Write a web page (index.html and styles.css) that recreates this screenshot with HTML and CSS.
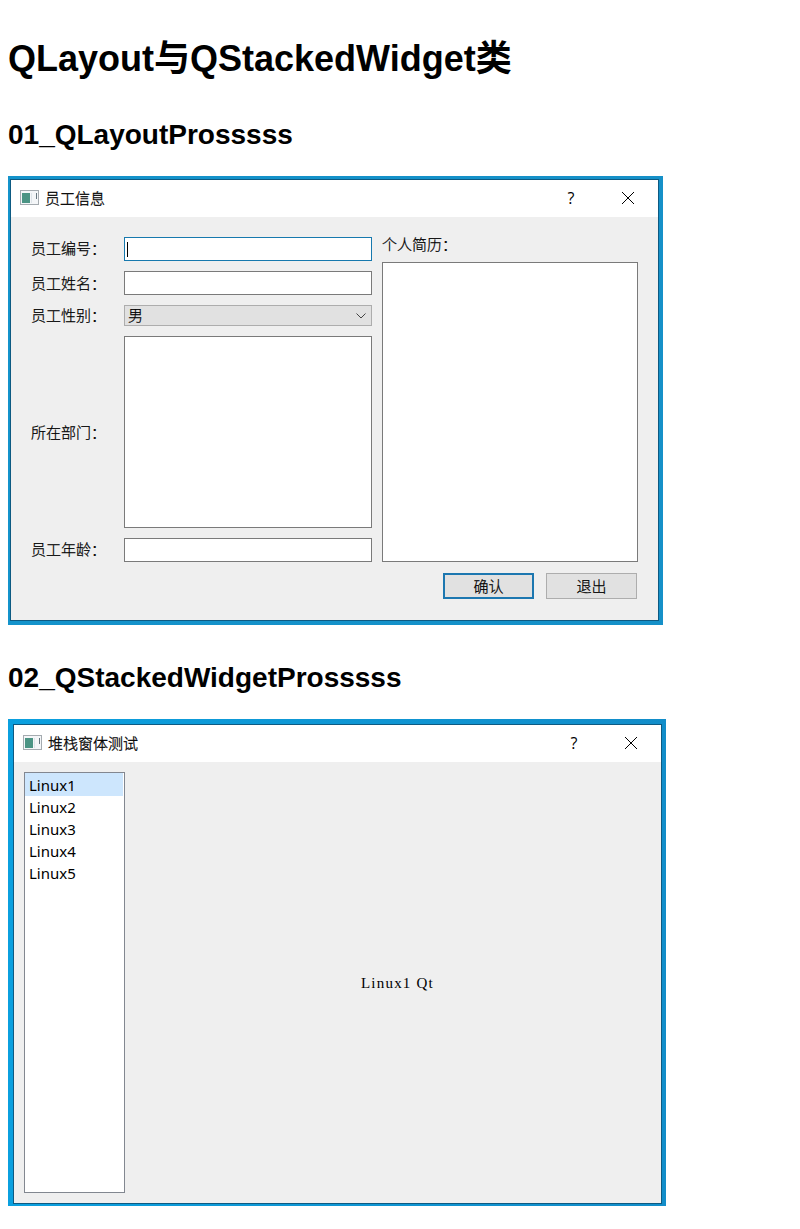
FILE: index.html
```html
<!DOCTYPE html>
<html lang="zh">
<head>
<meta charset="utf-8">
<title>QLayout与QStackedWidget类</title>
<link rel="stylesheet" href="styles.css">
</head>
<body>
<h1 class="title">QLayout与QStackedWidget类</h1>
<h2 class="section">01_QLayoutProsssss</h2>
<div class="desktop desktop-form">
  <div class="window">
    <div class="titlebar">
      <svg class="app-icon" width="19" height="15" viewBox="0 0 19 15"><rect x=".5" y=".5" width="18" height="14" fill="#f4f6f8" stroke="#a5abb0"/><rect x="2" y="3" width="8" height="10" fill="#4b9484"/><path d="M11.5 3v10" stroke="#dde3e8"/><path d="M16.500 3v6" stroke="#667780"/></svg>
      <span class="caption">员工信息</span>
      <span class="help">?</span>
      <svg class="close" width="14" height="14" viewBox="0 0 14 14"><path d="M1 1l12 12M13 1L1 13"/></svg>
    </div>
    <div class="form">
      <div class="fields">
        <label class="raised">员工编号：</label><div class="box focused"><i class="caret"></i></div>
        <label>员工姓名：</label><div class="box"></div>
        <label class="raised">员工性别：</label><div class="box combo"><span class="raised">男</span><svg width="10" height="6" viewBox="0 0 10 6"><path d="M.5 .5L5 5L9.500 .5"/></svg></div>
        <label>所在部门：</label><div class="box"></div>
        <label class="raised">员工年龄：</label><div class="box"></div>
      </div>
      <div class="resume">
        <label>个人简历：</label>
        <div class="box"></div>
        <div class="buttons"><div class="btn primary">确认</div><div class="btn">退出</div></div>
      </div>
    </div>
  </div>
</div>
<h2 class="section second">02_QStackedWidgetProsssss</h2>
<div class="desktop desktop-stack">
  <div class="window">
    <div class="titlebar">
      <svg class="app-icon" width="19" height="15" viewBox="0 0 19 15"><rect x=".5" y=".5" width="18" height="14" fill="#f4f6f8" stroke="#a5abb0"/><rect x="2" y="3" width="8" height="10" fill="#4b9484"/><path d="M11.5 3v10" stroke="#dde3e8"/><path d="M16.500 3v6" stroke="#667780"/></svg>
      <span class="caption">堆栈窗体测试</span>
      <span class="help">?</span>
      <svg class="close" width="14" height="14" viewBox="0 0 14 14"><path d="M1 1l12 12M13 1L1 13"/></svg>
    </div>
    <div class="stack">
      <ul class="list"><li class="selected">Linux1</li><li>Linux2</li><li>Linux3</li><li>Linux4</li><li>Linux5</li></ul>
      <div class="page"><span>Linux1 Qt</span></div>
    </div>
  </div>
</div>
</body>
</html>
```
FILE: styles.css
```css
* { box-sizing: border-box; }
body { margin: 0; padding: 37px 8px 0; background: #fff; color: #000; font-family: "Liberation Sans", "Noto Sans CJK SC", sans-serif; }
.title { margin: 0; font-size: 36px; line-height: 44px; height: 44px; }
.section { margin: 38px 0 0; font-size: 28px; line-height: 32px; height: 32px; }
.second { margin-top: 37px; }

.desktop { display: flex; }
.desktop-form { width: 655px; height: 449px; margin-top: 25px; padding: 3px 4px 4px 2px; background: linear-gradient(90deg, #1493cb, #1590c8); }
.desktop-stack { width: 658px; height: 487px; margin-top: 25px; padding: 5px 4px 2px 5px; background: linear-gradient(90deg, #0ba0df, #128dc9); }
.window { flex: 1; display: flex; flex-direction: column; border: 1px solid #0d5a82; background: #efefef; }
.titlebar { display: flex; align-items: center; height: 37px; padding: 0 23px 2px 9px; background: #fff; }
.app-icon { margin-right: 6px; }
.caption { flex: 1; font: 300 15px/20px "Noto Sans CJK SC", sans-serif; -webkit-text-stroke: .3px #000; }
.help { width: 10px; margin-right: 45px; font: 16px/20px "Open Sans", sans-serif; text-align: center; }
.close { fill: none; stroke: #000; stroke-width: 1; }

.form { flex: 1; display: flex; gap: 10px; padding: 20px 20px 21px; font: 300 15px/20px "Noto Sans CJK SC", sans-serif; -webkit-text-stroke: .25px #000; }
.fields { width: 341px; display: grid; grid-template-columns: 93px 248px; grid-template-rows: 24px 24px 21px 192px 24px; row-gap: 10px; align-items: center; }
.raised { padding-bottom: 2px; }
.box { height: 100%; border: 1px solid #7a7a7a; background: #fff; }
.focused { border-color: #1779ae; padding: 4px 2px; }
.caret { display: block; width: 1px; height: 15px; background: #000; }
.combo { display: flex; align-items: center; justify-content: space-between; padding: 0 5px 0 3px; border-color: #adadad; background: #e1e1e1; }
.combo svg { fill: none; stroke: #444; }
.resume { width: 256px; display: flex; flex-direction: column; }
.resume label { height: 25px; line-height: 14px; }
.resume .box { height: 300px; }
.buttons { display: flex; justify-content: flex-end; gap: 12px; margin: 11px 1px 0 0; }
.btn { width: 91px; height: 26px; border: 1px solid #adadad; background: #e1e1e1; text-align: center; line-height: 24px; }
.primary { border: 2px solid #1c77b0; line-height: 22px; }

.stack { flex: 1; display: flex; padding: 10px; }
.list { width: 101px; height: 421px; margin: 0; padding: 0; border: 1px solid #828790; background: #fff; list-style: none; font: 15px/22px "Noto Sans", sans-serif; }
.list li { height: 22px; padding-left: 4px; }
.list .selected { height: 23px; margin-right: 1px; line-height: 24px; background: #cde6fd; }
.page { flex: 1; padding: 201px 0 0 236px; font: 15px/20px "Liberation Serif", serif; letter-spacing: 1.2px; }
```
